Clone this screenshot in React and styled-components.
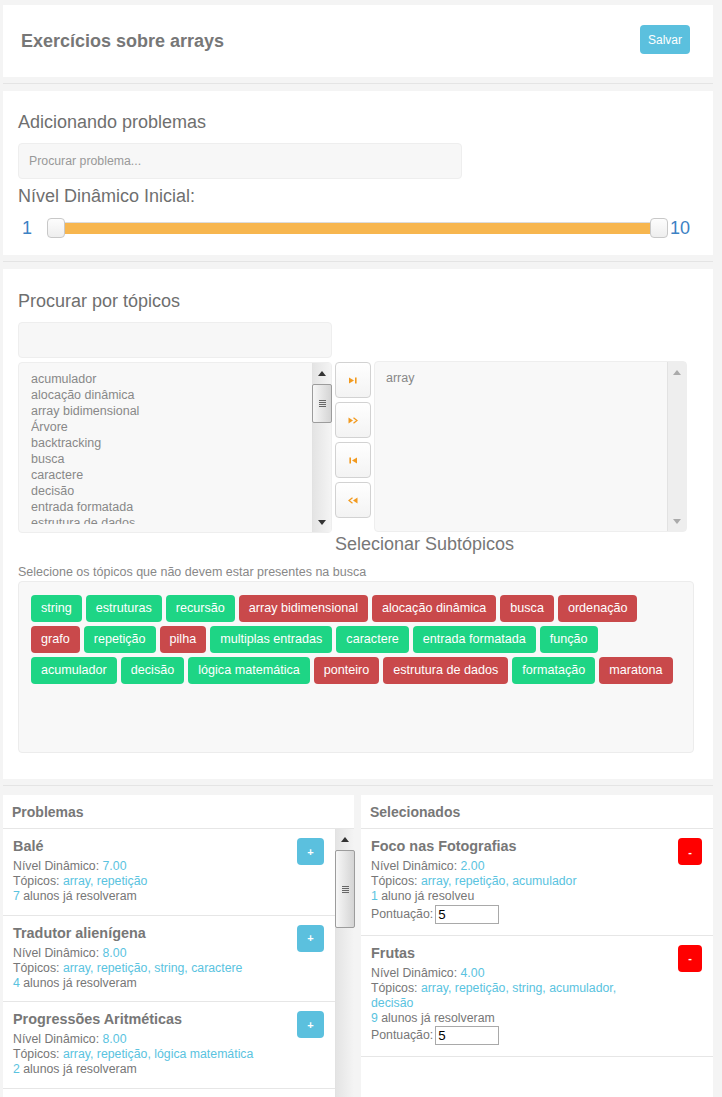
import React from 'react';
import styled, { createGlobalStyle } from 'styled-components';

const GlobalStyle = createGlobalStyle`
  body {
    margin: 0;
    background: #f4f4f4;
    font-family: "Liberation Sans", Arial, sans-serif;
    color: #777;
  }
  * { box-sizing: border-box; }
`;

const ORANGE = '#f29a1e';
const CYAN = '#5ac3e0';

const Page = styled.div`
  padding: 5px 9px 0 3px;
`;

const Card = styled.section`
  background: #fff;
`;

const Rule = styled.div`
  height: 1px;
  background: #e4e4e4;
  margin: 6px 0 7px;
`;

/* header */
const TopBar = styled(Card)`
  height: 72px;
  display: flex;
  align-items: center;
  justify-content: space-between;
  padding: 0 23px 0 18px;
`;

const PageTitle = styled.h1`
  margin: 0;
  font-size: 18px;
  font-weight: bold;
  color: #777;
`;

const SaveButton = styled.button`
  width: 50px;
  height: 29px;
  margin-bottom: 3px;
  border: none;
  border-radius: 4px;
  background: #5bc0de;
  color: #fff;
  font: 12px "Liberation Sans", Arial, sans-serif;
  padding: 0;
`;

/* problem search */
const FormCard = styled(Card)`
  padding: 21px 23px 17px 15px;
`;

const Heading = styled.h2`
  margin: 0;
  font-size: 18px;
  line-height: 20px;
  font-weight: normal;
  color: #6f6f6f;
`;

const SearchInput = styled.input`
  display: block;
  width: ${p => p.$width}px;
  height: 36px;
  margin-top: 11px;
  padding: 0 10px;
  background: #f7f7f7;
  border: 1px solid #eee;
  border-radius: 4px;
  font: 12.3px "Liberation Sans", Arial, sans-serif;
  color: #777;
  outline: none;
  &::placeholder { color: #999; }
`;

const Label = styled.div`
  margin-top: 7px;
  font-size: 18px;
  line-height: 20px;
  color: #6f6f6f;
`;

const SliderRow = styled.div`
  margin-top: 12px;
  display: flex;
  align-items: center;
  height: 20px;
`;

const SliderValue = styled.span`
  font-size: 18px;
  color: #3c82c4;
  margin: ${p => (p.$end ? '0 0 0 2px' : '0 15px 0 4px')};
`;

const Handle = styled.div`
  width: 18px;
  height: 20px;
  flex: 0 0 18px;
  border: 1px solid #c8c8c8;
  border-radius: 4px;
  background: linear-gradient(#fdfdfd, #eeeeee);
`;

const Fill = styled.div`
  flex: 1;
  height: 12px;
  background: #f7b64f;
  border-top: 1px solid #dcdcdc;
`;

/* topics */
const TopicsCard = styled(Card)`
  padding: 22px 19px 26px 15px;
`;

const DualList = styled.div`
  margin-top: 4px;
  display: flex;
  align-items: flex-start;
  gap: 3px;
`;

const ListBox = styled.div`
  width: ${p => p.$width}px;
  height: 171px;
  display: flex;
  background: #f8f8f8;
  border: 1px solid #eee;
  border-radius: 4px;
  margin-top: ${p => p.$shift || 0}px;
`;

const ListItems = styled.div`
  flex: 1;
  margin: 8px 0 8px ${p => p.$indent}px;
  overflow: hidden;
  font-size: 12.5px;
  line-height: 16px;
  color: #888;
`;

const Track = styled.div`
  width: 19px;
  flex: 0 0 19px;
  display: flex;
  flex-direction: column;
  background: ${p => (p.$disabled ? '#eeeeee' : 'linear-gradient(to right, #e4e4e4, #f4f4f4)')};
  border-left: 1px solid #e2e2e2;
`;

const Arrow = styled.div`
  height: 20px;
  display: flex;
  align-items: center;
  justify-content: center;
  margin-top: ${p => (p.$down ? 'auto' : '0')};
  &::before {
    content: '';
    border-left: 4px solid transparent;
    border-right: 4px solid transparent;
    ${p => (p.$down ? 'border-top' : 'border-bottom')}: 5px solid ${p => (p.$disabled ? '#aaa' : '#333')};
  }
`;

const Thumb = styled.div`
  margin: 1px 0 0 -1px;
  width: 20px;
  height: ${p => p.$size}px;
  border: 1px solid #9c9c9c;
  border-radius: 2px;
  background: linear-gradient(to right, #f7f7f7, #d4d4d4);
  display: flex;
  align-items: center;
  justify-content: center;
`;

const Grip = styled.div`
  width: 7px;
  height: 7px;
  background: repeating-linear-gradient(#666 0 1px, transparent 1px 2px);
`;

const Scrollbar = ({ thumb, disabled }) => (
  <Track $disabled={disabled}>
    <Arrow $disabled={disabled} />
    {thumb && (
      <Thumb $size={thumb}>
        <Grip />
      </Thumb>
    )}
    <Arrow $down $disabled={disabled} />
  </Track>
);

const MoveColumn = styled.div`
  width: 36px;
  display: flex;
  flex-direction: column;
  gap: 4px;
`;

const MoveButton = styled.button`
  width: 36px;
  height: 36px;
  padding: 0;
  display: flex;
  align-items: center;
  justify-content: center;
  border: 1px solid #d2d2d2;
  border-radius: 4px;
  background: linear-gradient(#ffffff, #f3f3f3);
`;

const SubLabel = styled.div`
  margin: 1px 0 0 317px;
  font-size: 18px;
  line-height: 20px;
  color: #777;
`;

const Hint = styled.div`
  margin-top: 11px;
  font-size: 12.5px;
  line-height: 15px;
  color: #888;
`;

const TagBox = styled.div`
  margin-top: 1px;
  height: 172px;
  padding: 13px 12px;
  display: flex;
  flex-wrap: wrap;
  align-content: flex-start;
  gap: 4px;
  background: #f8f8f8;
  border: 1px solid #ececec;
  border-radius: 4px;
`;

const Tag = styled.span`
  height: 27px;
  line-height: 27px;
  padding: 0 10px;
  border-radius: 4px;
  font-size: 12.6px;
  color: #fff;
  background: ${p => (p.$excluded ? '#c9494b' : '#1ed585')};
`;

/* bottom panels (margin collapses with the rule above, so 9 here = 2 more) */
const Columns = styled.div`
  margin-top: 9px;
  display: grid;
  grid-template-columns: 351px 352px;
  gap: 7px;
`;

const Panel = styled.div`
  background: #fff;
  height: 320px;
  display: flex;
  flex-direction: column;
`;

const PanelHeader = styled.div`
  height: 34px;
  flex: 0 0 34px;
  padding-left: 9px;
  display: flex;
  align-items: center;
  border-bottom: 1px solid #e6e6e6;
  font-size: 14px;
  font-weight: bold;
  color: #777;
`;

const PanelBody = styled.div`
  flex: 1;
  display: flex;
  min-height: 0;
`;

const ItemList = styled.div`
  flex: 1;
  overflow: hidden;
`;

const Item = styled.div`
  display: flex;
  align-items: flex-start;
  padding: 9px 11px 10.5px 10px;
  border-bottom: 1px solid #e6e6e6;
`;

const Info = styled.div`
  flex: 1;
  max-width: 285px;
  font-size: 12.3px;
  line-height: 15px;
  color: #777;
`;

const ItemTitle = styled.div`
  font-size: 14.4px;
  line-height: 17px;
  font-weight: bold;
  color: #777;
  margin-bottom: 4px;
`;

const Hl = styled.span`
  color: ${CYAN};
`;

const ScoreRow = styled.div`
  height: 20px;
  display: flex;
  align-items: center;
  gap: 2px;
`;

const ScoreInput = styled.input`
  width: 64px;
  height: 19px;
  border: 1px solid #a9a9a9;
  padding: 0 2px;
  font: 13.3px "Liberation Sans", Arial, sans-serif;
  color: #000;
`;

const SquareButton = styled.button`
  margin-left: auto;
  width: ${p => (p.$remove ? 24 : 27)}px;
  height: 27px;
  flex: 0 0 auto;
  padding: 0;
  border: none;
  border-radius: 4px;
  background: ${p => (p.$remove ? '#ff0000' : '#5bc0de')};
  color: #fff;
  font: bold 11px "Liberation Sans", Arial, sans-serif;
`;

const Icon = ({ kind }) => {
  const c = ORANGE;
  return (
    <svg width="10" height="7" viewBox="0 0 10 7">
      {kind === 'one' && (
        <>
          <path d="M1 0.5 L6 3.5 L1 6.5Z" fill={c} />
          <rect x="7" y="0.5" width="1.6" height="6" fill={c} />
        </>
      )}
      {kind === 'all' && (
        <>
          <path d="M0.5 0.5 L5 3.5 L0.5 6.5Z" fill={c} />
          <path d="M5.5 0.8 L9 3.5 L5.5 6.2" fill="none" stroke={c} strokeWidth="1.3" />
        </>
      )}
      {kind === 'back' && (
        <>
          <rect x="1.4" y="0.5" width="1.6" height="6" fill={c} />
          <path d="M9 0.5 L4 3.5 L9 6.5Z" fill={c} />
        </>
      )}
      {kind === 'backAll' && (
        <>
          <path d="M4.5 0.8 L1 3.5 L4.5 6.2" fill="none" stroke={c} strokeWidth="1.3" />
          <path d="M9.5 0.5 L5 3.5 L9.5 6.5Z" fill={c} />
        </>
      )}
    </svg>
  );
};

const available = [
  'acumulador', 'alocação dinâmica', 'array bidimensional', 'Árvore', 'backtracking',
  'busca', 'caractere', 'decisão', 'entrada formatada', 'estrutura de dados',
  'formatação', 'função',
];

const tags = [
  ['string', 0], ['estruturas', 0], ['recursão', 0], ['array bidimensional', 1],
  ['alocação dinâmica', 1], ['busca', 1], ['ordenação', 1], ['grafo', 1],
  ['repetição', 0], ['pilha', 1], ['multiplas entradas', 0], ['caractere', 0],
  ['entrada formatada', 0], ['função', 0], ['acumulador', 0], ['decisão', 0],
  ['lógica matemática', 0], ['ponteiro', 1], ['estrutura de dados', 1],
  ['formatação', 0], ['maratona', 1],
];

const problems = [
  { title: 'Balé', level: '7.00', topics: 'array, repetição', solved: 7 },
  { title: 'Tradutor alienígena', level: '8.00', topics: 'array, repetição, string, caractere', solved: 4 },
  { title: 'Progressões Aritméticas', level: '8.00', topics: 'array, repetição, lógica matemática', solved: 2 },
];

const selected = [
  { title: 'Foco nas Fotografias', level: '2.00', topics: 'array, repetição, acumulador', solved: 1 },
  { title: 'Frutas', level: '4.00', topics: 'array, repetição, string, acumulador, decisão', solved: 9 },
];

const ProblemInfo = ({ p, children }) => (
  <Info>
    <ItemTitle>{p.title}</ItemTitle>
    <div>Nível Dinâmico: <Hl>{p.level}</Hl></div>
    <div>Tópicos: <Hl>{p.topics}</Hl></div>
    <div>
      <Hl>{p.solved}</Hl> {p.solved === 1 ? 'aluno já resolveu' : 'alunos já resolveram'}
    </div>
    {children}
  </Info>
);

export default function App() {
  return (
    <Page>
      <GlobalStyle />
      <TopBar>
        <PageTitle>Exercícios sobre arrays</PageTitle>
        <SaveButton>Salvar</SaveButton>
      </TopBar>
      <Rule />

      <FormCard>
        <Heading>Adicionando problemas</Heading>
        <SearchInput $width={444} placeholder="Procurar problema..." />
        <Label>Nível Dinâmico Inicial:</Label>
        <SliderRow>
          <SliderValue>1</SliderValue>
          <Handle />
          <Fill />
          <Handle />
          <SliderValue $end>10</SliderValue>
        </SliderRow>
      </FormCard>
      <Rule />

      <TopicsCard>
        <Heading>Procurar por tópicos</Heading>
        <SearchInput $width={314} />
        <DualList>
          <ListBox $width={314}>
            <ListItems $indent={12}>
              {available.map(t => (
                <div key={t}>{t}</div>
              ))}
            </ListItems>
            <Scrollbar thumb={39} />
          </ListBox>
          <MoveColumn>
            <MoveButton><Icon kind="one" /></MoveButton>
            <MoveButton><Icon kind="all" /></MoveButton>
            <MoveButton><Icon kind="back" /></MoveButton>
            <MoveButton><Icon kind="backAll" /></MoveButton>
          </MoveColumn>
          <ListBox $width={313} $shift={-1}>
            <ListItems $indent={11}>
              <div>array</div>
            </ListItems>
            <Scrollbar disabled />
          </ListBox>
        </DualList>
        <SubLabel>Selecionar Subtópicos</SubLabel>
        <Hint>Selecione os tópicos que não devem estar presentes na busca</Hint>
        <TagBox>
          {tags.map(([t, ex]) => (
            <Tag key={t} $excluded={!!ex}>{t}</Tag>
          ))}
        </TagBox>
      </TopicsCard>
      <Rule />

      <Columns>
        <Panel>
          <PanelHeader>Problemas</PanelHeader>
          <PanelBody>
            <ItemList>
              {problems.map(p => (
                <Item key={p.title}>
                  <ProblemInfo p={p} />
                  <SquareButton>+</SquareButton>
                </Item>
              ))}
            </ItemList>
            <Scrollbar thumb={78} />
          </PanelBody>
        </Panel>
        <Panel>
          <PanelHeader>Selecionados</PanelHeader>
          <ItemList>
            {selected.map(p => (
              <Item key={p.title}>
                <ProblemInfo p={p}>
                  <ScoreRow>
                    Pontuação: <ScoreInput defaultValue="5" />
                  </ScoreRow>
                </ProblemInfo>
                <SquareButton $remove>-</SquareButton>
              </Item>
            ))}
          </ItemList>
        </Panel>
      </Columns>
    </Page>
  );
}
